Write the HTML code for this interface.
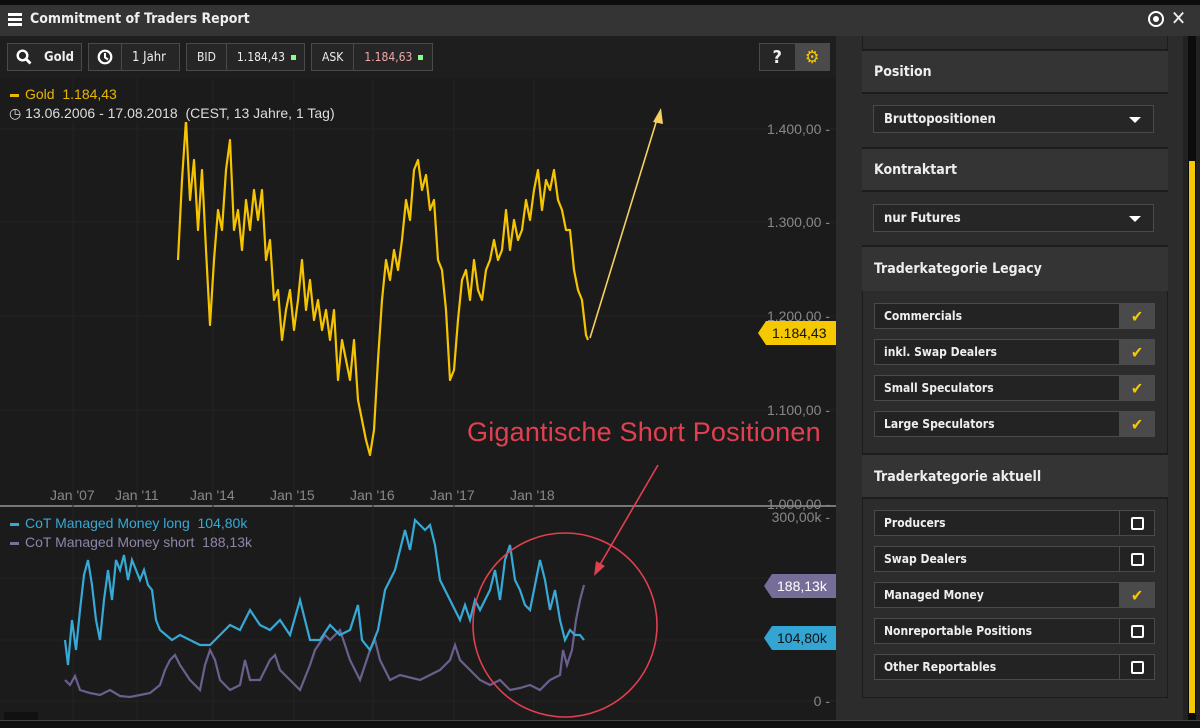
<!DOCTYPE html>
<html><head><meta charset="utf-8"><style>
*{margin:0;padding:0;box-sizing:border-box}
body{width:1200px;height:728px;background:#111;position:relative;overflow:hidden;font-family:"DejaVu Sans Condensed","Liberation Sans",sans-serif;color:#eee}
.a{position:absolute}
.btn{position:absolute;top:43px;height:28px;border:1px solid #4a4a4a;background:#262626;font-size:13px;display:flex;align-items:center}
.btn span{padding:0 10px;height:100%;display:flex;align-items:center;border-right:1px solid #4a4a4a}
.btn span:last-child{border-right:none}
.sec{position:absolute;left:862px;width:306px;background:#343434;border-top:2px solid #1c1c1c;font-size:14px;font-weight:bold;padding-left:12px;display:flex;align-items:center}
.body{position:absolute;left:862px;width:306px;background:#2c2c2c;border-top:2px solid #1c1c1c}
.dd{position:absolute;left:873px;width:281px;height:28px;background:#262626;border:1px solid #4a4a4a;font-size:13px;font-weight:bold;padding-left:10px;display:flex;align-items:center}
.dd:after{content:"";position:absolute;right:12px;top:11px;border-left:6px solid transparent;border-right:6px solid transparent;border-top:6px solid #fff}
.row{position:absolute;left:874px;width:281px;height:26px;background:#232323;border:1px solid #4a4a4a;font-size:12px;font-weight:bold;padding-left:9px;display:flex;align-items:center}
.cb{position:absolute;right:0;top:0;width:35px;height:24px;border-left:1px solid #4a4a4a;display:flex;align-items:center;justify-content:center}
.cb i{width:13px;height:13px;border:2px solid #fff;border-radius:2px;display:block}
.cb.on{background:#4a4a4a}
.ax{position:absolute;right:370px;font-family:"Liberation Sans",sans-serif;font-size:14px;color:#888;text-align:right}
.xl{position:absolute;top:487px;font-family:"Liberation Sans",sans-serif;font-size:14px;color:#888}
</style></head><body>
<div class="a" style="left:0;top:0;width:1200px;height:5px;background:#0c0c0c"></div>
<div class="a" style="left:0;top:5px;width:1200px;height:31px;background:#343434"></div>
<div class="a" style="left:8px;top:13px;width:14px;height:3px;background:#fff;box-shadow:0 5px 0 #fff,0 10px 0 #fff"></div>
<div class="a" style="left:30px;top:11px;font-size:14px;font-weight:bold">Commitment of Traders Report</div>
<div class="a" style="left:1148px;top:11px;width:16px;height:16px;border:2.5px solid #fff;border-radius:50%"></div>
<div class="a" style="left:1153px;top:16px;width:6px;height:6px;background:#fff;border-radius:50%"></div>
<div class="a" style="left:1171px;top:6px;font-size:20px;font-weight:bold">✕</div>

<div class="a" style="left:0;top:36px;width:838px;height:42px;background:#1e1e1e"></div>
<div class="btn" style="left:7px;width:75px"><span style="border:none;padding:0 8px"><svg width="16" height="16" viewBox="0 0 16 16"><circle cx="6.5" cy="6.5" r="4.8" stroke="#fff" stroke-width="2.4" fill="none"/><path d="M10 10l4.5 4.5" stroke="#fff" stroke-width="2.8"/></svg></span><span style="padding:0 4px;font-weight:bold">Gold</span></div>
<div class="btn" style="left:88px;width:92px"><span style="padding:0 8px"><svg width="16" height="16" viewBox="0 0 16 16"><circle cx="8" cy="8" r="6.3" stroke="#fff" stroke-width="2.2" fill="none"/><path d="M8 4v4.5l3 2" stroke="#fff" stroke-width="2" fill="none"/></svg></span><span>1 Jahr</span></div>
<div class="btn" style="left:186px;width:119px;font-size:12px"><span>BID</span><span>1.184,43 <b style="display:inline-block;width:5px;height:5px;background:#8f8;margin-left:6px"></b></span></div>
<div class="btn" style="left:311px;width:122px;font-size:12px"><span>ASK</span><span style="color:#f0a8a8">1.184,63 <b style="display:inline-block;width:5px;height:5px;background:#8f8;margin-left:6px"></b></span></div>
<div class="btn" style="left:759px;width:71px"><span style="width:36px;justify-content:center;font-weight:bold;font-size:18px;padding:0">?</span><span style="width:34px;background:#4a4a4a;justify-content:center;padding:0;color:#f5c800;font-size:18px">⚙</span></div>

<div class="a" style="left:0;top:78px;width:836px;height:642px;background:#1c1b1b"></div>
<div class="a" style="left:836px;top:36px;width:26px;height:684px;background:#2c2c2c"></div>
<div class="a" style="left:0;top:505px;width:836px;height:2px;background:#777"></div>

<svg class="a" style="left:0;top:78px" width="836" height="642" viewBox="0 78 836 642">
<g stroke="#232222" stroke-width="1">
<line x1="0" y1="129" x2="836" y2="129"/><line x1="0" y1="222" x2="836" y2="222"/><line x1="0" y1="316" x2="836" y2="316"/><line x1="0" y1="410" x2="836" y2="410"/>
<line x1="0" y1="578" x2="836" y2="578"/><line x1="0" y1="640" x2="836" y2="640"/><line x1="0" y1="701" x2="836" y2="701"/>
<line x1="73" y1="78" x2="73" y2="720"/><line x1="137" y1="78" x2="137" y2="720"/><line x1="213" y1="78" x2="213" y2="720"/><line x1="294" y1="78" x2="294" y2="720"/><line x1="373" y1="78" x2="373" y2="720"/><line x1="454" y1="78" x2="454" y2="720"/><line x1="534" y1="78" x2="534" y2="720"/>
</g>
<polyline fill="none" stroke="#f5c400" stroke-width="2.2" stroke-linejoin="round" points="178,260 182,180 186,120 190,200 194,160 198,230 202,170 206,250 210,325 214,260 218,210 222,230 226,170 230,140 234,230 238,210 242,250 246,200 250,230 254,190 258,220 262,190 266,260 270,240 274,300 278,290 282,340 286,310 290,290 294,330 298,300 302,260 306,310 310,280 314,320 318,300 322,330 326,310 330,340 334,310 338,380 342,340 346,360 350,380 354,340 358,400 362,420 366,440 370,455 374,430 378,360 382,300 386,260 390,280 394,250 398,270 402,240 406,200 410,220 414,170 418,160 422,190 426,175 430,210 434,200 438,260 442,270 446,310 450,380 454,370 458,320 462,280 466,270 470,300 474,260 478,290 482,300 486,270 490,260 494,240 498,260 502,250 506,210 510,250 514,220 518,240 522,230 526,200 530,220 534,190 538,170 542,210 546,180 550,190 554,170 558,200 562,210 566,230 570,230 574,270 578,290 582,300 586,335 588,340"/>
<polyline fill="none" stroke="#6a5f8e" stroke-width="2.2" points="65,680 70,685 75,676 80,690 90,693 100,695 110,690 120,696 130,697 140,695 150,693 160,685 165,670 170,660 175,655 180,665 190,680 200,690 205,665 210,650 215,660 220,680 230,690 240,685 245,660 250,680 260,680 270,660 275,655 280,670 290,680 300,690 310,665 315,650 325,635 330,640 340,630 345,645 350,660 360,680 370,650 375,640 380,660 390,680 400,675 420,680 430,675 440,670 450,660 455,645 460,660 470,670 480,680 490,685 500,680 510,690 520,688 530,685 540,690 550,680 560,675 563,650 567,665 572,650 576,620 580,600 584,585"/>
<polyline fill="none" stroke="#36a9d6" stroke-width="2.2" points="65,640 68,665 72,620 76,650 80,610 84,575 88,560 92,585 96,620 100,640 104,600 108,570 112,600 116,560 120,570 124,555 128,580 132,560 136,570 140,580 144,570 148,585 152,590 156,620 160,630 166,635 172,640 180,635 190,640 200,645 210,645 220,635 230,625 240,630 250,610 260,625 270,630 280,620 290,635 300,600 305,620 310,640 320,640 330,625 340,635 350,630 358,605 362,640 370,650 378,630 385,590 395,570 405,530 410,550 415,520 420,525 425,530 430,525 435,545 440,580 445,590 450,600 455,610 460,620 465,605 470,620 475,600 480,610 490,590 495,570 500,600 505,560 510,545 515,580 520,590 525,605 530,610 535,585 540,560 545,580 550,610 555,590 560,620 565,640 570,630 575,635 580,635 584,640"/>
<line x1="590" y1="338" x2="658" y2="116" stroke="#f5d060" stroke-width="1.6"/>
<path d="M653,122 L661,108 L663,124 Z" fill="#f5d060"/>
<line x1="658" y1="465" x2="598" y2="568" stroke="#e04050" stroke-width="1.6"/>
<path d="M594,576 L596,561 L605,566 Z" fill="#e04050"/>
<circle cx="565" cy="625" r="92" fill="none" stroke="#e04050" stroke-width="1.6"/>
</svg>

<div class="a" style="left:10px;top:86px;font-family:'Liberation Sans',sans-serif;font-size:14px;color:#e8b800"><b style="display:inline-block;width:9px;height:3px;background:#e8b800;vertical-align:middle;margin-right:6px"></b>Gold &nbsp;1.184,43</div>
<div class="a" style="left:9px;top:105px;font-family:'Liberation Sans',sans-serif;font-size:14px;color:#ddd;background:#1c1b1b">◷ 13.06.2006 - 17.08.2018 &nbsp;(CEST, 13 Jahre, 1 Tag)</div>
<div class="a" style="left:10px;top:515px;font-family:'Liberation Sans',sans-serif;font-size:14px;color:#36a9d6"><b style="display:inline-block;width:9px;height:3px;background:#36a9d6;vertical-align:middle;margin-right:6px"></b>CoT Managed Money long &nbsp;104,80k</div>
<div class="a" style="left:10px;top:534px;font-family:'Liberation Sans',sans-serif;font-size:14px;color:#8d86a8"><b style="display:inline-block;width:9px;height:3px;background:#7a70a0;vertical-align:middle;margin-right:6px"></b>CoT Managed Money short &nbsp;188,13k</div>
<div class="a" style="left:467px;top:417px;font-family:'Liberation Sans',sans-serif;font-size:27px;color:#e04050;letter-spacing:0.2px">Gigantische Short Positionen</div>

<div class="ax" style="top:121px">1.400,00 -</div>
<div class="ax" style="top:214px">1.300,00 -</div>
<div class="ax" style="top:308px">1.200,00 -</div>
<div class="ax" style="top:402px">1.100,00 -</div>
<div class="ax" style="top:496px">1.000,00 -</div>
<div class="ax" style="top:509px">300,00k -</div>
<div class="ax" style="top:693px">0 -</div>
<div class="xl" style="left:50px">Jan '07</div><div class="xl" style="left:115px">Jan '11</div><div class="xl" style="left:190px">Jan '14</div><div class="xl" style="left:270px">Jan '15</div><div class="xl" style="left:350px">Jan '16</div><div class="xl" style="left:430px">Jan '17</div><div class="xl" style="left:510px">Jan '18</div>

<svg class="a" style="left:758px;top:321px" width="78" height="24"><path d="M8,0H78V24H8L0,12Z" fill="#f5c800"/><text x="14" y="17" font-family="Liberation Sans" font-size="14" fill="#111">1.184,43</text></svg>
<svg class="a" style="left:764px;top:574px" width="72" height="24"><path d="M8,0H72V24H8L0,12Z" fill="#766e98"/><text x="13" y="17" font-family="Liberation Sans" font-size="14" fill="#fff">188,13k</text></svg>
<svg class="a" style="left:764px;top:626px" width="72" height="24"><path d="M8,0H72V24H8L0,12Z" fill="#33a5d2"/><text x="13" y="17" font-family="Liberation Sans" font-size="14" fill="#111">104,80k</text></svg>
<div class="a" style="left:4px;top:712px;width:34px;height:8px;background:#111"></div>

<!-- right panel -->
<div class="a" style="left:838px;top:36px;width:362px;height:684px;background:#2c2c2c"></div>
<div class="a" style="left:1183px;top:36px;width:17px;height:684px;background:#222"></div>
<div class="a" style="left:1188px;top:36px;width:8px;height:684px;background:#0c0c0c"></div>
<div class="a" style="left:1189px;top:161px;width:6px;height:552px;background:#f5c800"></div>
<div class="a" style="left:862px;top:36px;width:306px;height:662px;background:#2c2c2c;border:1px solid #1c1c1c;border-top:none"></div>
<div class="sec" style="top:49px;height:44px">Position</div>
<div class="body" style="top:92px;height:57px"></div>
<div class="dd" style="top:105px">Bruttopositionen</div>
<div class="sec" style="top:147px;height:44px">Kontraktart</div>
<div class="body" style="top:190px;height:57px"></div>
<div class="dd" style="top:204px">nur Futures</div>
<div class="sec" style="top:245px;height:46px">Traderkategorie Legacy</div>
<div class="row" style="top:303px">Commercials<div class="cb on" style="color:#f5c800;font-size:16px">✔</div></div>
<div class="row" style="top:339px">inkl. Swap Dealers<div class="cb on" style="color:#f5c800;font-size:16px">✔</div></div>
<div class="row" style="top:375px">Small Speculators<div class="cb on" style="color:#f5c800;font-size:16px">✔</div></div>
<div class="row" style="top:411px">Large Speculators<div class="cb on" style="color:#f5c800;font-size:16px">✔</div></div>
<div class="sec" style="top:453px;height:45px">Traderkategorie aktuell</div>
<div class="a" style="left:862px;top:497px;width:306px;height:2px;background:#1c1c1c"></div>
<div class="row" style="top:510px">Producers<div class="cb"><i></i></div></div>
<div class="row" style="top:546px">Swap Dealers<div class="cb"><i></i></div></div>
<div class="row" style="top:582px">Managed Money<div class="cb on" style="color:#f5c800;font-size:16px">✔</div></div>
<div class="row" style="top:618px">Nonreportable Positions<div class="cb"><i></i></div></div>
<div class="row" style="top:654px">Other Reportables<div class="cb"><i></i></div></div>
<div class="a" style="left:0;top:720px;width:1200px;height:8px;background:#111;border-top:1px solid #444"></div>
</body></html>
